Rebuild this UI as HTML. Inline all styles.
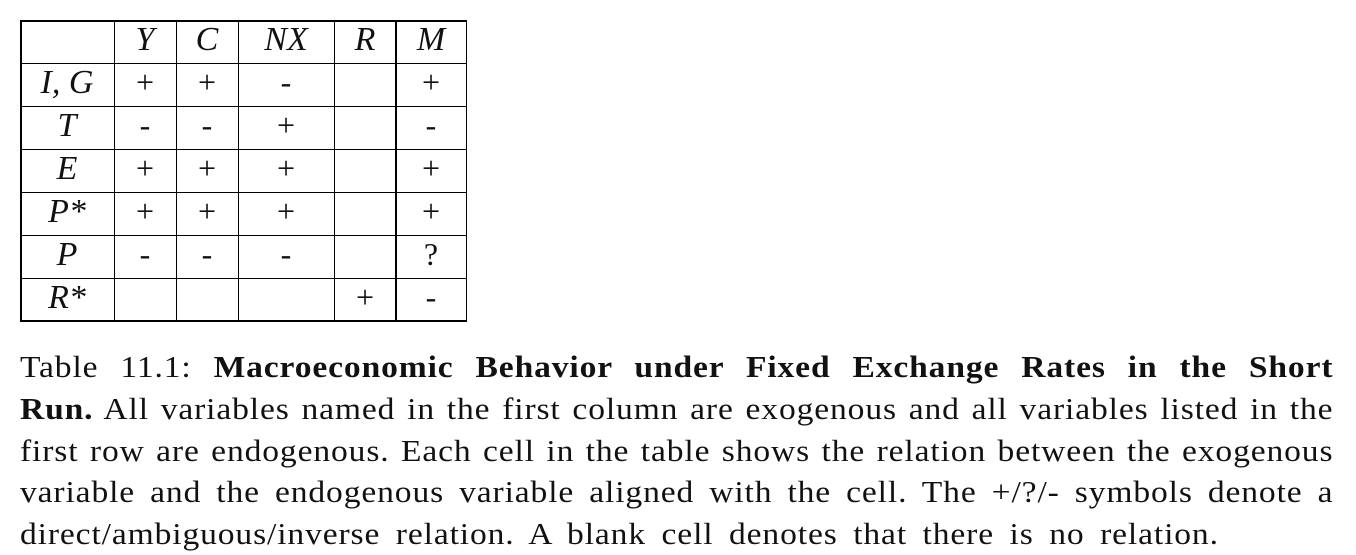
<!DOCTYPE html>
<html><head><meta charset="utf-8"><style>
body{margin:0;width:1356px;height:554px;background:#fff;position:relative;overflow:hidden;font-family:"Liberation Serif",serif;color:#111}
.v{position:absolute;top:20px;height:301px;width:1.5px;background:#000}
.h{position:absolute;left:20px;width:447px;height:1.5px;background:#000}
.c{position:absolute;width:94px;text-align:center;font-size:32px;line-height:43px}
.i{font-style:italic;font-size:34px}
.l{position:absolute;left:20px;width:1194px;font-size:30.5px;line-height:42px;white-space:nowrap;text-align:justify;text-align-last:justify;transform:scaleX(1.1);transform-origin:0 0;letter-spacing:0.8px}
</style></head><body>
<div class="v" style="left:20px"></div><div class="v" style="left:113.5px"></div><div class="v" style="left:175.5px"></div><div class="v" style="left:237.5px"></div><div class="v" style="left:333.5px"></div><div class="v" style="left:395px"></div><div class="v" style="left:465.5px"></div>
<div class="h" style="top:20px"></div><div class="h" style="top:62.5px"></div><div class="h" style="top:105.5px"></div><div class="h" style="top:148.5px"></div><div class="h" style="top:191.5px"></div><div class="h" style="top:234.5px"></div><div class="h" style="top:277.5px"></div><div class="h" style="top:320px"></div>
<div id="t"></div>
<script>
var cols=[[20,114],[114,176],[176,238],[238,334],[334,396],[396,466]];
var rows=[["","Y","C","NX","R","M"],["I, G","+","+","-","","+"],["T","-","-","+","","-"],["E","+","+","+","","+"],["P*","+","+","+","","+"],["P","-","-","-","","?"],["R*","","","","+","-"]];
var h="";
rows.forEach(function(r,ri){r.forEach(function(t,ci){if(!t)return;var it=(ri==0||ci==0);var x=cols[ci][0],w=cols[ci][1]-x;
h+='<div class="c'+(it?' i':'')+'" style="left:'+x+'px;width:'+w+'px;top:'+(18+ri*43)+'px">'+t+'</div>';});});
document.getElementById('t').innerHTML=h;
</script>
<div class="l" style="top:346px">Table 11.1: <b>Macroeconomic Behavior under Fixed Exchange Rates in the Short</b></div>
<div class="l" style="top:388px"><b>Run.</b> All variables named in the first column are exogenous and all variables listed in the</div>
<div class="l" style="top:430px">first row are endogenous. Each cell in the table shows the relation between the exogenous</div>
<div class="l" style="top:471px">variable and the endogenous variable aligned with the cell. The +/?/- symbols denote a</div>
<div class="l" style="top:513px;text-align-last:left;word-spacing:5.7px">direct/ambiguous/inverse relation. A blank cell denotes that there is no relation.</div>
</body></html>
